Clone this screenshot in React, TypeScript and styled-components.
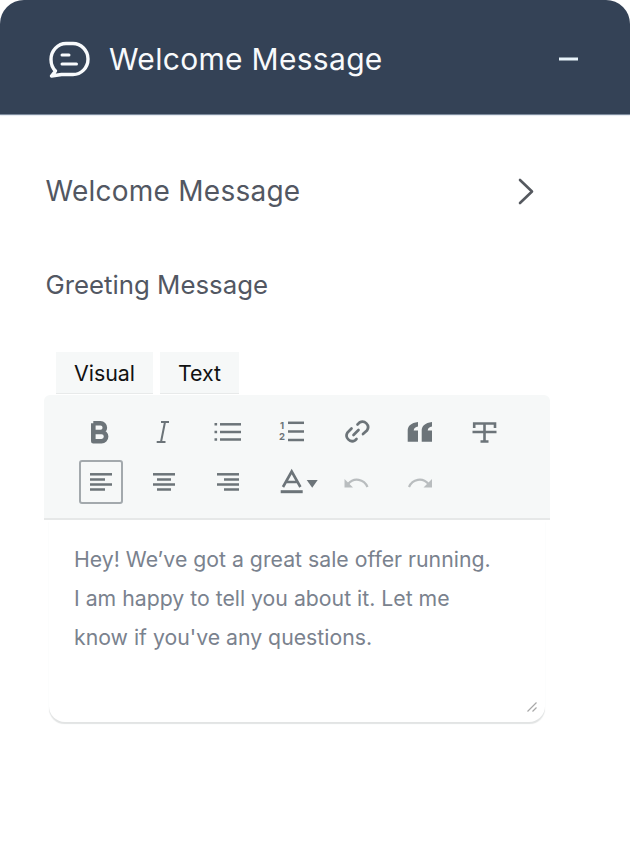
import React from "react";
import styled, { createGlobalStyle } from "styled-components";

const Global = createGlobalStyle`
  html, body { margin: 0; padding: 0; background: #fff; }
  body { font-family: Inter, "Liberation Sans", sans-serif; width: 630px; height: 846px; overflow: hidden; }
`;

const Panel = styled.div`
  width: 630px;
  height: 846px;
  display: flex;
  flex-direction: column;
  background: #fff;
`;

const Header = styled.header`
  height: 115px;
  box-sizing: border-box;
  background: #344256;
  border-radius: 24px 24px 0 0;
  border-bottom: 1px solid #7c8a9c;
  box-shadow: 0 1px 1px #e5e9f0;
  display: flex;
  align-items: center;
  padding: 4px 52px 0 48px;
  color: #f8fafc;
`;

const HeaderTitle = styled.h1`
  flex: 1;
  margin: 0 0 0 19px;
  font-size: 30px;
  letter-spacing: 0.3px;
  font-weight: 400;
  line-height: 40px;
`;

const Body = styled.main`
  display: flex;
  flex-direction: column;
  padding: 0 0 0 44px;
`;

const SectionRow = styled.div`
  display: flex;
  align-items: center;
  justify-content: space-between;
  height: 40px;
  margin: 56px 96px 0 1.5px;
`;

const SectionTitle = styled.h2`
  margin: 0;
  font-size: 28px;
  letter-spacing: 0.25px;
  font-weight: 400;
  color: #525762;
`;

const Label = styled.div`
  margin: 56px 0 0 1.5px;
  height: 36px;
  line-height: 36px;
  font-size: 25.8px;
  color: #525762;
`;

const Tabs = styled.div`
  display: flex;
  gap: 7px;
  margin: 49px 0 0 12px;
`;

const Tab = styled.div<{ $w: number }>`
  width: ${(p) => p.$w}px;
  height: 42px;
  box-sizing: border-box;
  background: #f6f8f8;
  border-bottom: 1px solid #e8eaea;
  display: flex;
  align-items: center;
  justify-content: center;
  font-size: 21.4px;
  color: #111;
`;

const Toolbar = styled.div`
  width: 506px;
  height: 125px;
  box-sizing: border-box;
  margin-top: 1px;
  background: #f6f8f8;
  border-bottom: 2px solid #e6e8e8;
  border-radius: 6px 6px 0 0;
  padding: 15px 0 0 35px;
  display: flex;
  flex-direction: column;
  gap: 6px;
`;

const ToolRow = styled.div`
  display: flex;
  gap: 20px;
`;

const ToolButton = styled.div<{ $active?: boolean; $muted?: boolean }>`
  width: 44px;
  height: 44px;
  box-sizing: border-box;
  display: flex;
  align-items: center;
  justify-content: center;
  border-radius: 3px;
  border: ${(p) => (p.$active ? "2px solid #a3a9ad" : "none")};
  color: ${(p) => (p.$muted ? "#b9bdbf" : "#6c7479")};
  svg { display: block; overflow: visible; flex: none; }
`;

const EditorArea = styled.div`
  position: relative;
  box-sizing: border-box;
  width: 496px;
  height: 202px;
  margin-left: 5px;
  padding: 20px 0 0 25px;
  border-radius: 0 0 16px 16px;
  box-shadow: 0 2px 1px -0.5px #e2e4e4;
  color: #7a828e;
  font-size: 21.25px;
  line-height: 39px;
`;

const Line = styled.div`
  white-space: nowrap;
`;

const ResizeHandle = styled.svg`
  position: absolute;
  right: 8px;
  bottom: 10px;
`;

const Sw = { fill: "none", stroke: "currentColor", strokeWidth: 2.5 } as const;

const Ico: React.FC<{ children: React.ReactNode }> = ({ children }) => (
  <svg width="32" height="32" viewBox="0 0 32 32" aria-hidden>
    {children}
  </svg>
);

const lines = (rows: [number, number, number][]) =>
  rows.map(([y, a, b], i) => <path key={i} d={`M${a} ${y}H${b}`} {...Sw} />);

export default function App() {
  return (
    <Panel>
      <Global />
      <Header>
        <svg width="42" height="40" viewBox="0 0 42 40" fill="none" stroke="currentColor" strokeWidth="3.4" strokeLinecap="round" strokeLinejoin="round">
          <path d="M3.5 37 L7.5 32 C4.5 29 3 25 3 20.5 C3 11.5 10 4.5 18 4.5 H25 C33 4.5 40 11.5 40 20 C40 29 33 35.5 25 35.5 H13.5 Z" />
          <path d="M14 16H21" strokeWidth="3" />
          <path d="M14 25H28.5" strokeWidth="3" />
        </svg>
        <HeaderTitle>Welcome Message</HeaderTitle>
        <svg width="19" height="4" viewBox="0 0 19 4">
          <rect width="19" height="3" y="0.5" fill="#e8f3fa" />
        </svg>
      </Header>
      <Body>
        <SectionRow>
          <SectionTitle>Welcome Message</SectionTitle>
          <svg width="16" height="27" viewBox="0 0 16 27" fill="none" stroke="#55595f" strokeWidth="2.6" strokeLinecap="round" strokeLinejoin="round">
            <path d="M2 2 L14 13.5 L2 25" />
          </svg>
        </SectionRow>
        <Label>Greeting Message</Label>
        <Tabs>
          <Tab $w={97}>Visual</Tab>
          <Tab $w={79}>Text</Tab>
        </Tabs>
        <Toolbar>
          <ToolRow>
            <ToolButton>
              <Ico>
                <path d="M8.3 7.3H15.5a4.3 4.3 0 0 1 0 8.7H8.3V7.3M8.3 16V25.2H16.5a4.6 4.6 0 0 0 0-9.2" fill="none" stroke="currentColor" strokeWidth="4.6" strokeLinejoin="round" />
              </Ico>
            </ToolButton>
            <ToolButton>
              <Ico>
                <path d="M12 6H20M7.7 26H16.5M16 6L12 26" {...Sw} strokeWidth={2} />
              </Ico>
            </ToolButton>
            <ToolButton>
              <Ico>
                {lines([[8.3, 7, 28], [16, 7, 28], [23.5, 7, 28]])}
                <path d="M1.5 7h2.6v2.6H1.5zM1.5 14.7h2.6v2.6H1.5zM1.5 22.2h2.6v2.6H1.5z" fill="currentColor" />
              </Ico>
            </ToolButton>
            <ToolButton>
              <Ico>
                {lines([[6.8, 11, 27], [15.5, 11, 27], [24, 11, 27]])}
                <text x="5" y="13" fontSize="9.5" fontWeight="700" textAnchor="middle" fill="currentColor" fontFamily="Inter">1</text>
                <text x="5" y="24" fontSize="9.5" fontWeight="700" textAnchor="middle" fill="currentColor" fontFamily="Inter">2</text>
              </Ico>
            </ToolButton>
            <ToolButton>
              <Ico>
                <path d="M10.5 12.5 L6.5 16.5 a5.6 5.6 0 0 0 7.6 7.8 L15.5 23 M16.5 8.5 L18.5 6.5 a5.6 5.6 0 0 1 7.6 7.8 L22 18 M12.5 19 L17.5 14" {...Sw} strokeWidth={2.7} strokeLinecap="round" />
              </Ico>
            </ToolButton>
            <ToolButton>
              <Ico>
                <path d="M2.7 25.7V14.5C2.7 10 6 7 13 6V10.6C10.5 11 9 12 8.7 14.5H13V25.7ZM16.7 25.7V14.5C16.7 10 20 7 27 6V10.6C24.5 11 23 12 22.7 14.5H27V25.7Z" fill="currentColor" />
              </Ico>
            </ToolButton>
            <ToolButton>
              <Ico>
                <path d="M5.2 12V7.5H26V12M15.5 7.5V25M3.5 16H27.5M11.5 25.5H19.5" {...Sw} strokeWidth={2.6} />
              </Ico>
            </ToolButton>
          </ToolRow>
          <ToolRow>
            <ToolButton $active>
              <Ico>{lines([[8.3, 5, 27], [13.5, 5, 20], [18.5, 5, 27], [23.5, 5, 20]])}</Ico>
            </ToolButton>
            <ToolButton>
              <Ico>{lines([[8.3, 4, 26], [13.5, 8, 22], [18.5, 4, 26], [23.5, 8, 22]])}</Ico>
            </ToolButton>
            <ToolButton>
              <Ico>{lines([[8.3, 4, 26], [13.5, 11, 26], [18.5, 4, 26], [23.5, 11, 26]])}</Ico>
            </ToolButton>
            <ToolButton>
              <Ico>
                <path d="M6 21 L14.7 5.5 L23.4 21 M9 16H20.5" {...Sw} strokeWidth={2.6} />
                <path d="M3.7 25.7H25.7" {...Sw} strokeWidth={3} />
                <path d="M29.7 14H40.7L35.2 21.7Z" fill="currentColor" />
              </Ico>
            </ToolButton>
            <ToolButton $muted>
              <Ico>
                <path d="M26.5 21C23 13 13 11 7 18" {...Sw} strokeWidth={2.2} />
                <path d="M3.5 13V21.5H12" fill="currentColor" stroke="none" />
              </Ico>
            </ToolButton>
            <ToolButton $muted>
              <Ico>
                <path d="M4 21C7.5 13 17.5 11 23.5 18" {...Sw} strokeWidth={2.2} />
                <path d="M27 13V21.5H18.5" fill="currentColor" stroke="none" />
              </Ico>
            </ToolButton>
          </ToolRow>
        </Toolbar>
        <EditorArea>
          <Line>Hey! We’ve got a great sale offer running.</Line>
          <Line>I am happy to tell you about it. Let me</Line>
          <Line>know if you've any questions.</Line>
          <ResizeHandle width="10" height="10" viewBox="0 0 10 10" stroke="#a8a8a8" strokeWidth="1.2">
            <path d="M0.5 9.5L9.5 0.5M5.5 9.5L9.5 5.5" />
          </ResizeHandle>
        </EditorArea>
      </Body>
    </Panel>
  );
}
